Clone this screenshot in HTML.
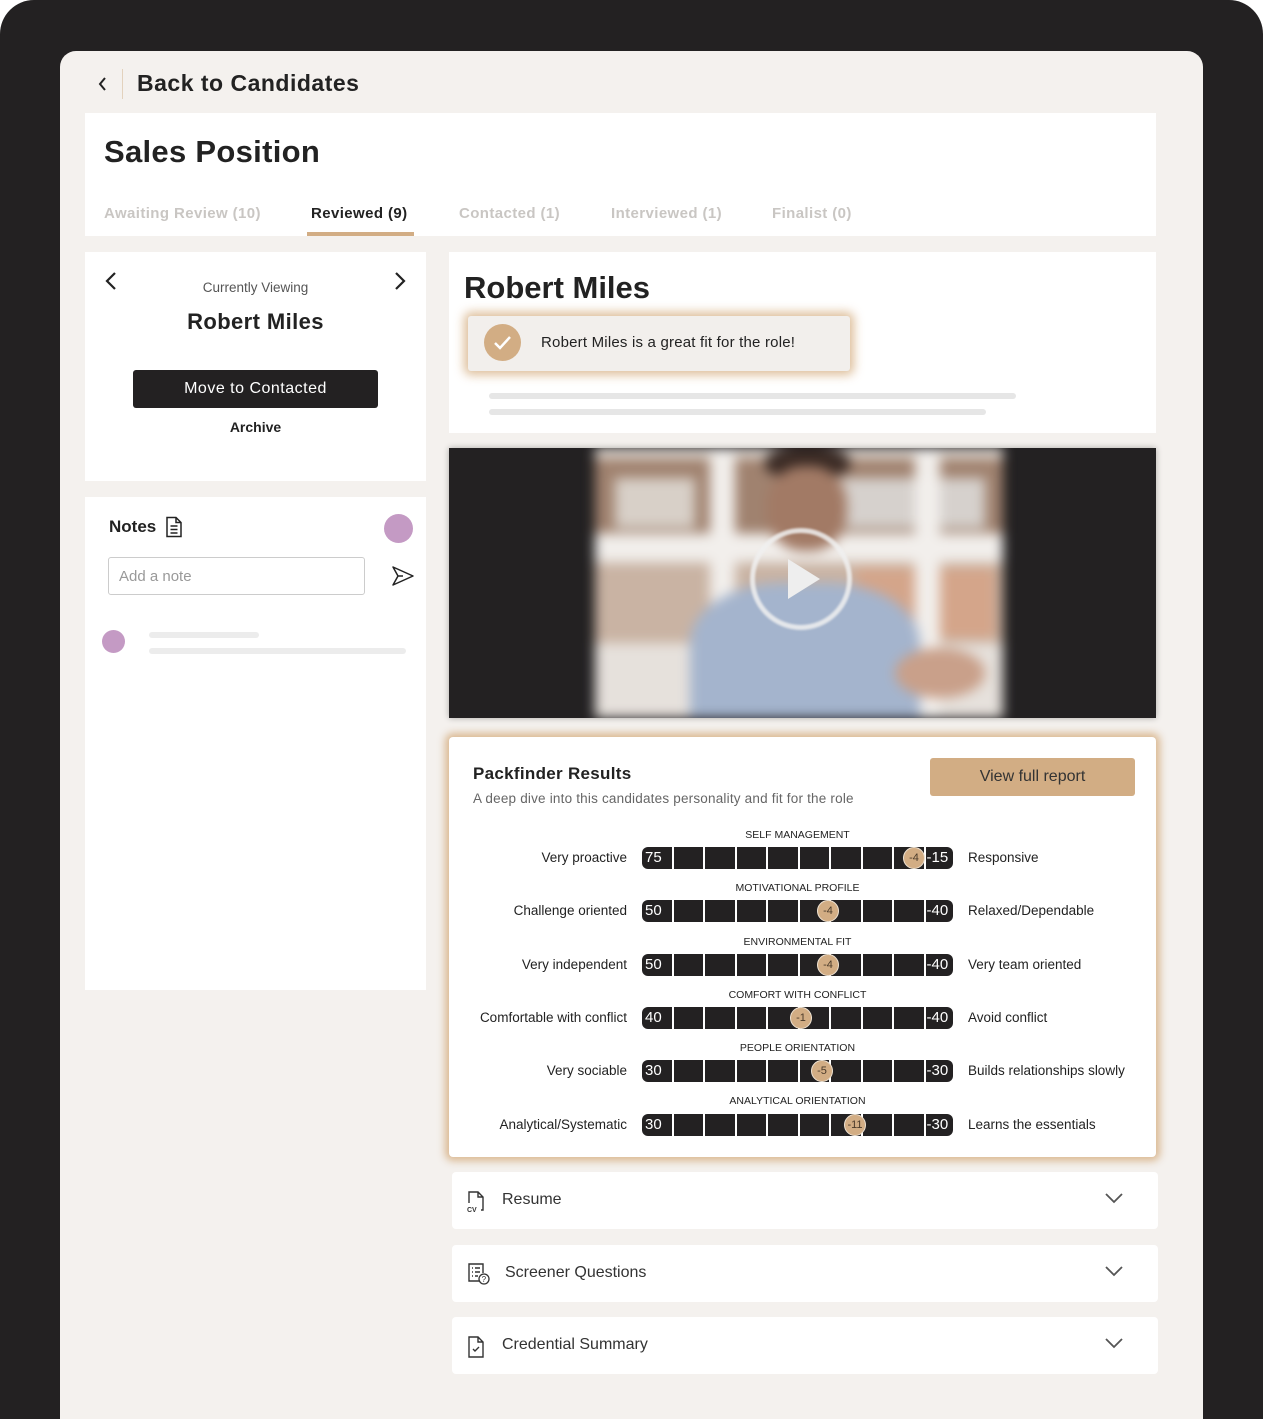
<!DOCTYPE html>
<html><head><meta charset="utf-8"><style>
*{box-sizing:border-box;margin:0;padding:0}
html,body{width:1263px;height:1419px;overflow:hidden}
body{background:#fff;font-family:"Liberation Sans",sans-serif;color:#222;position:relative}
.a{position:absolute}
.frame{left:0;top:0;width:1263px;height:1419px;background:#232122;border-radius:34px 34px 0 0}
.panel{left:60px;top:51px;width:1143px;height:1368px;background:#f4f1ee;border-radius:16px 16px 0 0}
.card{background:#fff}
.t{position:absolute;white-space:nowrap}
.bar{position:absolute;left:642px;width:311px;height:22px;display:flex;gap:2px;background:#fff}
.bar div{flex:1;background:#232122;color:#fff;font-size:15px;line-height:22px;padding-left:3px}
.bar div:first-child{border-radius:6px 0 0 6px}
.bar div:last-child{border-radius:0 6px 6px 0;padding-left:1px}
.mk{position:absolute;width:22px;height:22px;border-radius:50%;background:#d2ad84;border:1px solid #efe3d3;font-size:11px;line-height:20px;text-align:center;color:#4a3a2a}
.cat{position:absolute;left:642px;width:311px;text-align:center;font-size:10.5px;color:#222}
.lt{position:absolute;right:636px;font-size:13.5px;text-align:right}
.rt{position:absolute;left:968px;font-size:13.5px}
.acc{position:absolute;left:452px;width:706px;height:57px;background:#fff;border-radius:4px}
.acc .t{font-size:16px;color:#333;top:19px}
.chev{position:absolute;right:34px;top:20px}
</style></head><body>
<div class="a frame"></div>
<div class="a panel"></div>

<svg class="a" style="left:97px;top:76px" width="12" height="16" viewBox="0 0 12 16"><path d="M8 2L3 8l5 6" fill="none" stroke="#222" stroke-width="2"/></svg>
<div class="a" style="left:122px;top:69px;width:1px;height:30px;background:#e3d2bd"></div>
<div class="t" style="left:137px;top:70px;font-size:23px;font-weight:bold;letter-spacing:.5px">Back to Candidates</div>

<div class="a card" style="left:85px;top:113px;width:1071px;height:123px"></div>
<div class="t" style="left:104px;top:134px;font-size:31px;font-weight:bold;letter-spacing:.3px">Sales Position</div>
<div class="t" style="left:104px;top:205px;font-size:15px;color:#c9c6c3;font-weight:bold;letter-spacing:.4px">Awaiting Review (10)</div>
<div class="t" style="left:311px;top:205px;font-size:15px;color:#222;font-weight:bold;letter-spacing:.4px">Reviewed (9)</div>
<div class="a" style="left:307px;top:232px;width:107px;height:4px;background:#d2ad84"></div>
<div class="t" style="left:459px;top:205px;font-size:15px;color:#c9c6c3;font-weight:bold;letter-spacing:.4px">Contacted (1)</div>
<div class="t" style="left:611px;top:205px;font-size:15px;color:#c9c6c3;font-weight:bold;letter-spacing:.4px">Interviewed (1)</div>
<div class="t" style="left:772px;top:205px;font-size:15px;color:#c9c6c3;font-weight:bold;letter-spacing:.4px">Finalist (0)</div>

<div class="a card" style="left:85px;top:252px;width:341px;height:229px"></div>
<svg class="a" style="left:104px;top:271px" width="14" height="20" viewBox="0 0 14 20"><path d="M11 2L3 10l8 8" fill="none" stroke="#222" stroke-width="2.2"/></svg>
<svg class="a" style="left:393px;top:271px" width="14" height="20" viewBox="0 0 14 20"><path d="M3 2l8 8-8 8" fill="none" stroke="#222" stroke-width="2.2"/></svg>
<div class="t" style="left:85px;width:341px;text-align:center;top:280px;font-size:13.5px;color:#555">Currently Viewing</div>
<div class="t" style="left:85px;width:341px;text-align:center;top:309px;font-size:22px;font-weight:bold;letter-spacing:.4px">Robert Miles</div>
<div class="a" style="left:133px;top:370px;width:245px;height:38px;background:#232122;border-radius:3px;color:#fff;font-size:16px;text-align:center;line-height:38px;letter-spacing:.5px">Move to Contacted</div>
<div class="t" style="left:85px;width:341px;text-align:center;top:419px;font-size:14px;font-weight:bold">Archive</div>

<div class="a card" style="left:85px;top:497px;width:341px;height:493px"></div>
<div class="t" style="left:109px;top:517px;font-size:17px;font-weight:bold">Notes</div>
<svg class="a" style="left:164px;top:516px" width="20" height="22" viewBox="0 0 20 22"><path d="M3 1.5h9l5 5v14H3z M12 1.5v5h5 M6.5 10h7 M6.5 13.5h7 M6.5 17h7" fill="none" stroke="#222" stroke-width="1.5"/></svg>
<div class="a" style="left:384px;top:514px;width:29px;height:29px;border-radius:50%;background:#c49ac4"></div>
<div class="a" style="left:108px;top:557px;width:257px;height:38px;border:1px solid #ccc;border-radius:3px"></div>
<div class="t" style="left:119px;top:568px;font-size:15px;color:#999">Add a note</div>
<svg class="a" style="left:391px;top:565px" width="24" height="22" viewBox="0 0 24 22"><path d="M2 2l20 9-20 9 5-9z M7 11h5" fill="none" stroke="#222" stroke-width="1.5" stroke-linejoin="round"/></svg>
<div class="a" style="left:102px;top:630px;width:23px;height:23px;border-radius:50%;background:#c49ac4"></div>
<div class="a" style="left:149px;top:632px;width:110px;height:6px;border-radius:3px;background:#ececec"></div>
<div class="a" style="left:149px;top:648px;width:257px;height:6px;border-radius:3px;background:#ececec"></div>

<div class="a card" style="left:449px;top:252px;width:707px;height:181px"></div>
<div class="t" style="left:464px;top:270px;font-size:31px;font-weight:bold">Robert Miles</div>
<div class="a" style="left:468px;top:316px;width:382px;height:55px;background:#f2efec;border-radius:3px;box-shadow:0 0 10px 4px rgba(214,175,130,.8)"></div>
<div class="a" style="left:484px;top:324px;width:37px;height:37px;border-radius:50%;background:#d2ad84"></div>
<svg class="a" style="left:491px;top:331px" width="23" height="23" viewBox="0 0 23 23"><path d="M4 12l5 5 10-11" fill="none" stroke="#fff" stroke-width="2.5"/></svg>
<div class="t" style="left:541px;top:334px;font-size:15px;letter-spacing:.2px">Robert Miles is a great fit for the role!</div>
<div class="a" style="left:489px;top:393px;width:527px;height:6px;border-radius:3px;background:#e6e6e6"></div>
<div class="a" style="left:489px;top:409px;width:497px;height:6px;border-radius:3px;background:#e6e6e6"></div>

<div class="a" style="left:449px;top:448px;width:707px;height:270px;background:#232122;overflow:hidden;box-shadow:0 0 6px rgba(0,0,0,.3)">
 <div class="a" style="left:146px;top:0;width:408px;height:270px;background:#e6e1dc;overflow:hidden;filter:blur(6px)">
  <div class="a" style="left:0;top:10px;width:408px;height:75px;background:#a0826f"></div>
  <div class="a" style="left:20px;top:30px;width:80px;height:50px;background:#d8d0c8"></div>
  <div class="a" style="left:230px;top:30px;width:160px;height:50px;background:#d6d1cd"></div>
  <div class="a" style="left:0;top:88px;width:408px;height:24px;background:#f2efec"></div>
  <div class="a" style="left:0;top:115px;width:408px;height:80px;background:#c9b3a3"></div>
  <div class="a" style="left:260px;top:120px;width:140px;height:70px;background:#d4a58a"></div>
  <div class="a" style="left:115px;top:0;width:25px;height:270px;background:#f2efec"></div>
  <div class="a" style="left:320px;top:0;width:25px;height:270px;background:#f2efec"></div>
  <div class="a" style="left:170px;top:0;width:85px;height:30px;border-radius:40%;background:#3a2a24"></div>
  <div class="a" style="left:172px;top:18px;width:80px;height:85px;border-radius:45%;background:#a27a65"></div>
  <div class="a" style="left:95px;top:135px;width:230px;height:150px;border-radius:40% 40% 0 0;background:#a4b4cd"></div>
  <div class="a" style="left:300px;top:200px;width:90px;height:50px;background:#c9a08a;border-radius:50%"></div>
 </div>
 <div class="a" style="left:301px;top:80px;width:102px;height:102px;border-radius:50%;border:5px solid rgba(240,240,240,.85);filter:blur(1px)"></div>
 <svg class="a" style="left:335px;top:108px" width="40" height="46" viewBox="0 0 40 46"><path d="M4 3l32 20-32 20z" fill="#eee"/></svg>
</div>

<div class="a card" style="left:449px;top:737px;width:707px;height:420px;border-radius:4px;box-shadow:0 0 8px 4px rgba(214,175,130,.85)"></div>
<div class="t" style="left:473px;top:764px;font-size:17px;font-weight:bold;letter-spacing:.3px">Packfinder Results</div>
<div class="t" style="left:473px;top:791px;font-size:13.5px;color:#666;letter-spacing:.2px">A deep dive into this candidates personality and fit for the role</div>
<div class="a" style="left:930px;top:758px;width:205px;height:38px;background:#d2ad84;border-radius:3px;font-size:16px;color:#333;text-align:center;line-height:38px">View full report</div>

<div class="cat" style="top:829px">SELF MANAGEMENT</div>
<div class="lt" style="top:850px">Very proactive</div>
<div class="bar" style="top:847px"><div>75</div><div></div><div></div><div></div><div></div><div></div><div></div><div></div><div></div><div>-15</div></div>
<div class="mk" style="left:903px;top:847px">-4</div>
<div class="rt" style="top:850px">Responsive</div>

<div class="cat" style="top:882px">MOTIVATIONAL PROFILE</div>
<div class="lt" style="top:903px">Challenge oriented</div>
<div class="bar" style="top:900px"><div>50</div><div></div><div></div><div></div><div></div><div></div><div></div><div></div><div></div><div>-40</div></div>
<div class="mk" style="left:817px;top:900px">-4</div>
<div class="rt" style="top:903px">Relaxed/Dependable</div>

<div class="cat" style="top:936px">ENVIRONMENTAL FIT</div>
<div class="lt" style="top:957px">Very independent</div>
<div class="bar" style="top:954px"><div>50</div><div></div><div></div><div></div><div></div><div></div><div></div><div></div><div></div><div>-40</div></div>
<div class="mk" style="left:817px;top:954px">-4</div>
<div class="rt" style="top:957px">Very team oriented</div>

<div class="cat" style="top:989px">COMFORT WITH CONFLICT</div>
<div class="lt" style="top:1010px">Comfortable with conflict</div>
<div class="bar" style="top:1007px"><div>40</div><div></div><div></div><div></div><div></div><div></div><div></div><div></div><div></div><div>-40</div></div>
<div class="mk" style="left:790px;top:1007px">-1</div>
<div class="rt" style="top:1010px">Avoid conflict</div>

<div class="cat" style="top:1042px">PEOPLE ORIENTATION</div>
<div class="lt" style="top:1063px">Very sociable</div>
<div class="bar" style="top:1060px"><div>30</div><div></div><div></div><div></div><div></div><div></div><div></div><div></div><div></div><div>-30</div></div>
<div class="mk" style="left:811px;top:1060px">-5</div>
<div class="rt" style="top:1063px">Builds relationships slowly</div>

<div class="cat" style="top:1095px">ANALYTICAL ORIENTATION</div>
<div class="lt" style="top:1117px">Analytical/Systematic</div>
<div class="bar" style="top:1114px"><div>30</div><div></div><div></div><div></div><div></div><div></div><div></div><div></div><div></div><div>-30</div></div>
<div class="mk" style="left:844px;top:1114px">-11</div>
<div class="rt" style="top:1117px">Learns the essentials</div>

<div class="acc" style="top:1172px">
 <svg class="a" style="left:14px;top:18px" width="20" height="24" viewBox="0 0 20 24"><path d="M3 13V2h9l5 5v13h-2 M12 2v5h5" fill="none" stroke="#333" stroke-width="1.4"/><text x="1" y="22" font-size="7" font-weight="bold" fill="#333" font-family="Liberation Sans">CV</text></svg>
 <div class="t" style="left:50px">Resume</div>
 <svg class="chev" width="20" height="12" viewBox="0 0 20 12"><path d="M2 2l8 8 8-8" fill="none" stroke="#555" stroke-width="1.8"/></svg>
</div>
<div class="acc" style="top:1245px">
 <svg class="a" style="left:15px;top:17px" width="24" height="24" viewBox="0 0 24 24"><path d="M13 19H2V2h14v9 M5 6h1 M8 6h5 M5 10h1 M8 10h5 M5 14h1 M8 14h3" fill="none" stroke="#333" stroke-width="1.4"/><circle cx="17" cy="17" r="5" fill="#fff" stroke="#333" stroke-width="1.3"/><text x="14.6" y="20" font-size="8" fill="#333" font-family="Liberation Sans">?</text></svg>
 <div class="t" style="left:53px">Screener Questions</div>
 <svg class="chev" width="20" height="12" viewBox="0 0 20 12"><path d="M2 2l8 8 8-8" fill="none" stroke="#555" stroke-width="1.8"/></svg>
</div>
<div class="acc" style="top:1317px">
 <svg class="a" style="left:14px;top:18px" width="20" height="24" viewBox="0 0 20 24"><path d="M3 2h9l5 5v15H3z M12 2v5h5 M7 14l2 2 4-4" fill="none" stroke="#333" stroke-width="1.4"/></svg>
 <div class="t" style="left:50px">Credential Summary</div>
 <svg class="chev" width="20" height="12" viewBox="0 0 20 12"><path d="M2 2l8 8 8-8" fill="none" stroke="#555" stroke-width="1.8"/></svg>
</div>
</body></html>
